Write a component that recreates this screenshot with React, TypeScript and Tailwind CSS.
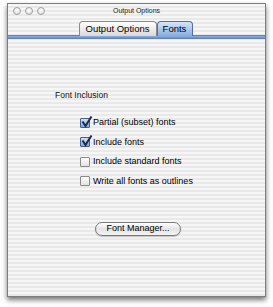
import React from 'react';

const stripes =
  'bg-[repeating-linear-gradient(180deg,#f6f6f6_0px,#f6f6f6_2px,#e9e9e9_2px,#e9e9e9_4px)]';

const Light = () => (
  <span className="w-[8px] h-[8px] rounded-full border border-[#a0a0a0] bg-[radial-gradient(circle_at_50%_35%,#ffffff,#d9d9d9)]" />
);

const Check = ({ checked, label }: { checked: boolean; label: string }) => (
  <div className="flex items-center gap-[3px] h-[10px]">
    <span
      className={`relative w-[10px] h-[10px] border ${
        checked
          ? 'border-[#4a5f86] bg-[linear-gradient(180deg,#cfe0f7,#7ea6e0)]'
          : 'border-[#8a8a8a] bg-[linear-gradient(180deg,#ffffff,#e2e2e2)]'
      } rounded-[1px]`}
    >
      {checked && (
        <svg className="absolute left-[0px] top-[-3px]" width="12" height="12" viewBox="0 0 12 12">
          <path d="M1.5 5.5 L4.5 10 L10.5 0.5" fill="none" stroke="#1c2a4c" strokeWidth="2" />
        </svg>
      )}
    </span>
    <span className="text-[9px] leading-none text-black">{label}</span>
  </div>
);

export default function App() {
  return (
    <div className="w-[273px] h-[307px] bg-white pt-[3px] pl-[7px] font-['Liberation_Sans',sans-serif]">
      <div
        className={`w-[259px] h-[294px] border border-[#7d7d7d] ${stripes} shadow-[0_3px_5px_rgba(0,0,0,0.55)] flex flex-col`}
      >
        {/* title bar */}
        <div className="relative h-[13px] flex items-center pl-[5px] gap-[4px]">
          <Light />
          <Light />
          <Light />
          <span className="absolute inset-x-0 text-center text-[7px] leading-none text-[#222]">
            Output Options
          </span>
        </div>

        {/* tabs */}
        <div className="relative h-[22px] flex justify-center items-end pr-[2px]">
          <div className="absolute left-0 right-0 bottom-[0px] h-[4px] bg-[linear-gradient(180deg,#8fb0e0,#6a8fc8)] border-y border-[#6283b8]" />
          <div className="relative z-10 flex items-end mb-[3px]">
            <div className="w-[78px] h-[15px] flex items-center justify-center border border-[#8a8a8a] border-b-0 rounded-t-[4px] bg-[linear-gradient(180deg,#ffffff,#d8d8d8)] text-[9.5px] leading-none text-black">
              Output Options
            </div>
            <div className="w-[36px] h-[15px] flex items-center justify-center border border-[#4f6fa5] border-b-0 rounded-t-[4px] bg-[linear-gradient(180deg,#d7e6fa,#86acdf)] text-[9.5px] leading-none text-black">
              Fonts
            </div>
          </div>
        </div>

        {/* content */}
        <div className="flex-1 flex flex-col pl-[47px] pt-[52px]">
          <div className="text-[8.5px] leading-none text-[#111]">Font Inclusion</div>
          <div className="flex flex-col gap-[9.5px] pl-[25px] pt-[18px]">
            <Check checked label="Partial (subset) fonts" />
            <Check checked label="Include fonts" />
            <Check checked={false} label="Include standard fonts" />
            <Check checked={false} label="Write all fonts as outlines" />
          </div>
          <div className="pl-[40px] pt-[28px]">
            <button className="w-[86px] h-[14px] rounded-full border border-[#7a7a7a] bg-[linear-gradient(180deg,#ffffff,#e4e4e4_50%,#f4f4f4)] shadow-[0_1px_1px_rgba(0,0,0,0.2)] text-[9px] leading-none text-black">
              Font Manager...
            </button>
          </div>
        </div>
      </div>
    </div>
  );
}
